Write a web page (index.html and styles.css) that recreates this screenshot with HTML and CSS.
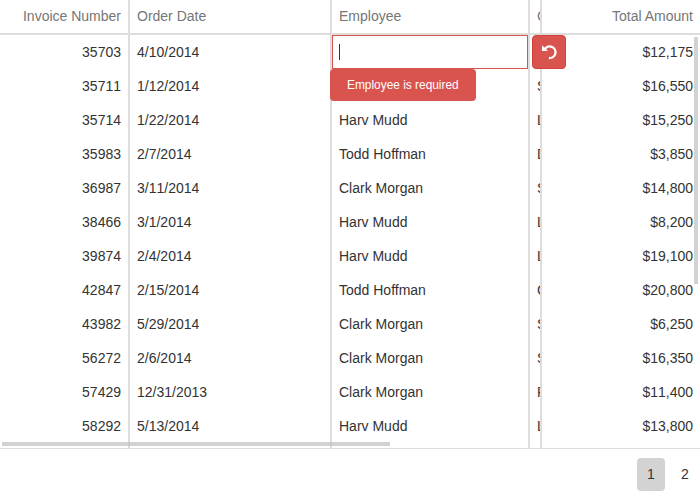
FILE: index.html
```
<!DOCTYPE html>
<html lang="en">
<head>
<meta charset="utf-8">
<title>Invoices</title>
<link rel="stylesheet" href="styles.css">
</head>
<body>
<div class="datagrid">
  <div class="row header">
    <div class="cell num">Invoice Number</div><div class="cell">Order Date</div><div class="cell">Employee</div><div class="cell partial">C</div><div class="cell num">Total Amount</div>
  </div>
  <div class="rows">
    <div class="row"><div class="cell num">35703</div><div class="cell date">4/10/2014</div>
      <div class="cell editing"><div class="editor"><span class="caret"></span></div><div class="message">Employee is required</div>
        <div class="revert"><svg width="18" height="18" viewBox="0 0 18 18"><path d="M4.9 6A5.8 5.8 0 1 1 8.9 15" fill="none" stroke="#fff" stroke-width="2.3"/><path d="M2 2.3V8H7.9Z" fill="#fff"/></svg></div></div>
      <div class="cell partial"></div><div class="cell num">$12,175</div></div>
    <div class="row"><div class="cell num">35711</div><div class="cell date">1/12/2014</div><div class="cell"></div><div class="cell partial">S</div><div class="cell num">$16,550</div></div>
    <div class="row"><div class="cell num">35714</div><div class="cell date">1/22/2014</div><div class="cell">Harv Mudd</div><div class="cell partial">L</div><div class="cell num">$15,250</div></div>
    <div class="row"><div class="cell num">35983</div><div class="cell date">2/7/2014</div><div class="cell">Todd Hoffman</div><div class="cell partial">D</div><div class="cell num">$3,850</div></div>
    <div class="row"><div class="cell num">36987</div><div class="cell date">3/11/2014</div><div class="cell">Clark Morgan</div><div class="cell partial">S</div><div class="cell num">$14,800</div></div>
    <div class="row"><div class="cell num">38466</div><div class="cell date">3/1/2014</div><div class="cell">Harv Mudd</div><div class="cell partial">L</div><div class="cell num">$8,200</div></div>
    <div class="row"><div class="cell num">39874</div><div class="cell date">2/4/2014</div><div class="cell">Harv Mudd</div><div class="cell partial">L</div><div class="cell num">$19,100</div></div>
    <div class="row"><div class="cell num">42847</div><div class="cell date">2/15/2014</div><div class="cell">Todd Hoffman</div><div class="cell partial">C</div><div class="cell num">$20,800</div></div>
    <div class="row"><div class="cell num">43982</div><div class="cell date">5/29/2014</div><div class="cell">Clark Morgan</div><div class="cell partial">S</div><div class="cell num">$6,250</div></div>
    <div class="row"><div class="cell num">56272</div><div class="cell date">2/6/2014</div><div class="cell">Clark Morgan</div><div class="cell partial">S</div><div class="cell num">$16,350</div></div>
    <div class="row"><div class="cell num">57429</div><div class="cell date">12/31/2013</div><div class="cell">Clark Morgan</div><div class="cell partial">P</div><div class="cell num">$11,400</div></div>
    <div class="row"><div class="cell num">58292</div><div class="cell date">5/13/2014</div><div class="cell">Harv Mudd</div><div class="cell partial">L</div><div class="cell num">$13,800</div></div>
    <div class="row filler"><div class="cell"></div><div class="cell"></div><div class="cell"></div><div class="cell"></div><div class="cell"></div></div>
    <div class="scroll vertical"></div>
    <div class="scroll horizontal"></div>
  </div>
  <div class="pager"><div class="page selected">1</div><div class="page">2</div></div>
</div>
</body>
</html>
```
FILE: styles.css
```
* { box-sizing: border-box; }
body {
  margin: 0;
  background: #fff;
  color: #333;
  font: 14px/20px "Liberation Sans", Arial, sans-serif;
}
.datagrid {
  display: flex;
  flex-direction: column;
  width: 700px;
  height: 500px;
  overflow: hidden;
}
.row {
  display: grid;
  grid-template-columns: 130px 202px 198px 12px 158px;
  height: 34px;
}
.header {
  height: 35px;
  flex: none;
  color: #767676;
  border-bottom: 2px solid #ddd;
}
.cell {
  min-width: 0;
  padding: 7px;
  white-space: nowrap;
  overflow: hidden;
  border-right: 2px solid #ddd;
}
.header .cell { padding-top: 6px; }
.cell:last-child { border-right: 0; }
.cell.partial { padding-right: 0; }
.num { text-align: right; }
.rows .num,
.date { font-kerning: none; }
.rows {
  position: relative;
  height: 413px;
  flex: none;
  overflow: hidden;
}
.filler { height: 5px; }
.filler .cell { padding: 0; }
.cell.editing {
  position: relative;
  padding: 0;
  overflow: visible;
}
.editor {
  height: 34px;
  padding: 8px 6px;
  border: 1px solid #d9534f;
}
.caret {
  display: block;
  width: 1px;
  height: 16px;
  background: #333;
}
.message {
  position: absolute;
  z-index: 2;
  left: -2px;
  top: 34px;
  width: 146px;
  height: 32px;
  padding-left: 17px;
  border-radius: 4px;
  background: #d9534f;
  color: #fff;
  font-size: 11.9px;
  line-height: 32px;
}
.revert {
  position: absolute;
  z-index: 2;
  left: 200px;
  top: 0;
  display: flex;
  align-items: center;
  justify-content: center;
  width: 34px;
  height: 34px;
  border: 1px solid #d43f3a;
  border-radius: 4px;
  background: #d9534f;
}
.scroll {
  position: absolute;
  background: rgba(191, 191, 191, .7);
}
.vertical {
  top: 2px;
  right: 2px;
  width: 4px;
  height: 247px;
}
.horizontal {
  left: 2px;
  bottom: 2px;
  width: 388px;
  height: 4px;
}
.pager {
  display: flex;
  flex: 1;
  justify-content: flex-end;
  gap: 6px;
  padding: 9px 1px 9px 0;
  border-top: 1px solid #ddd;
}
.page {
  width: 28px;
  height: 33px;
  border-radius: 4px;
  line-height: 33px;
  text-align: center;
}
.selected { background: #d3d3d3; }
```
